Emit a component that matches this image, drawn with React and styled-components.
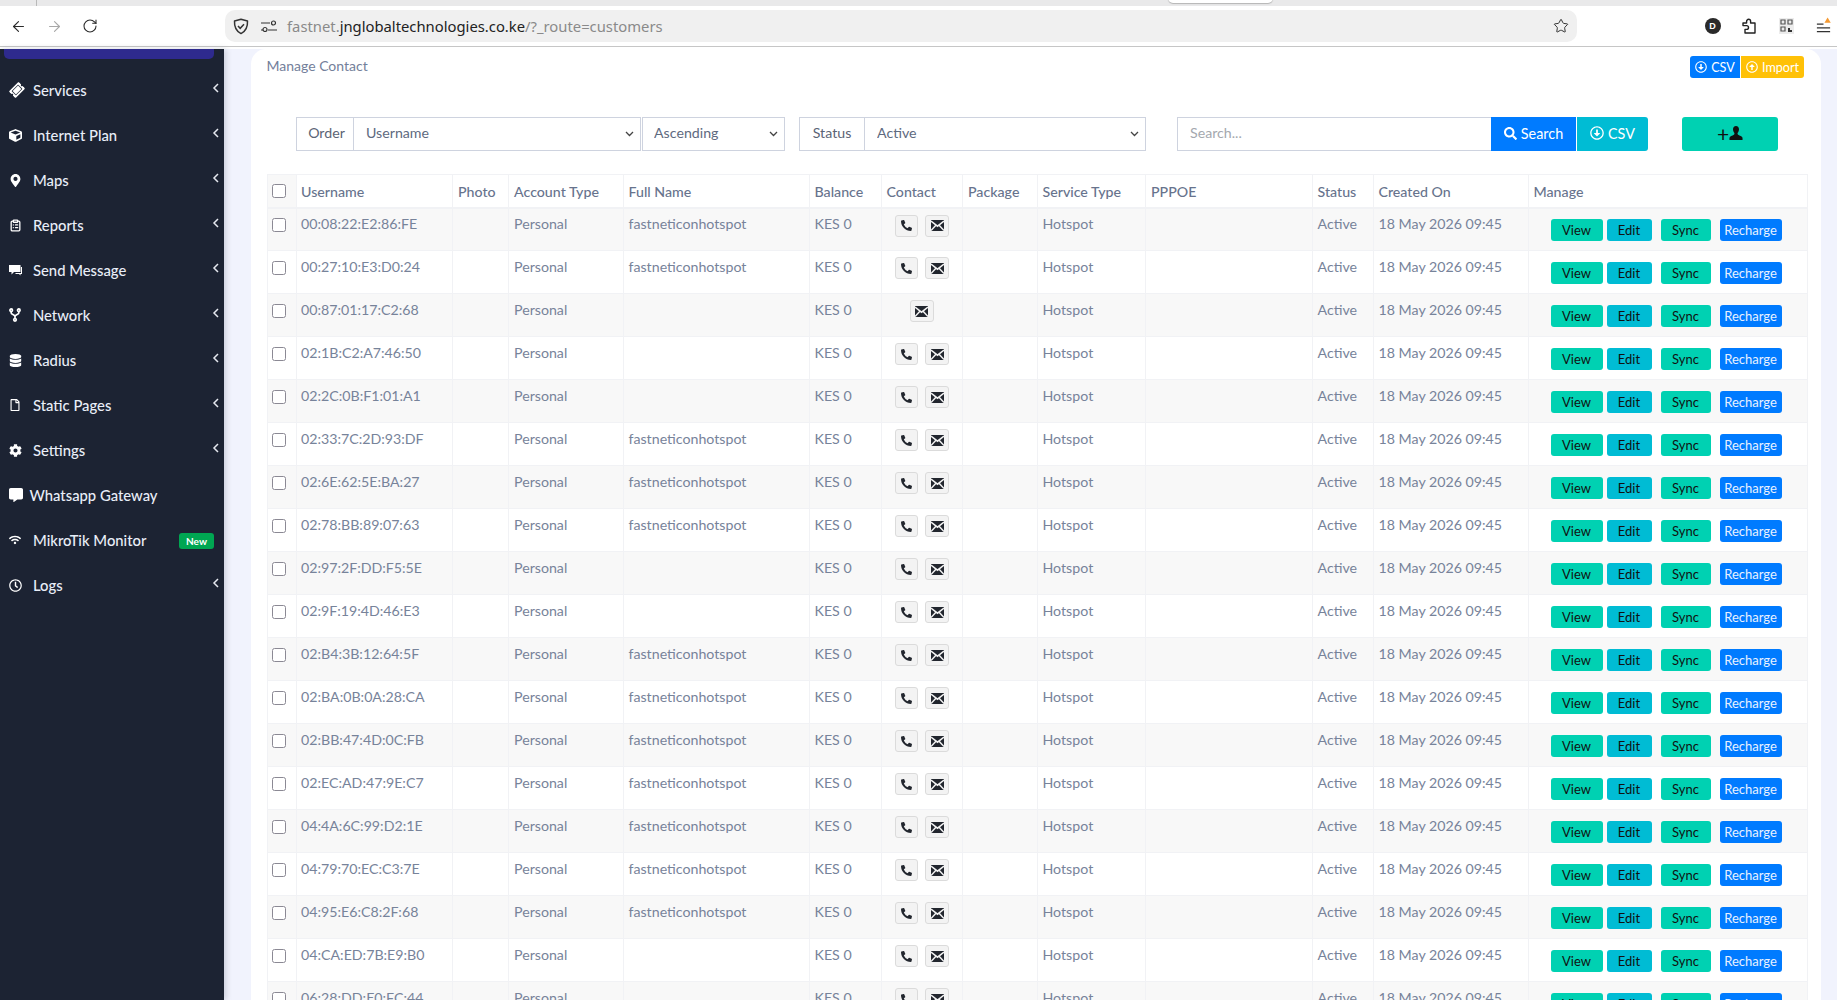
import React from "react";
import styled, { createGlobalStyle } from "styled-components";
import { ArrowLeft, ArrowRight, RotateCw, Star, ClipboardList } from "lucide-react";
import {
  FaTicketAlt, FaCube, FaMapMarkerAlt, FaDatabase, FaRegFile, FaCog, FaCommentAlt, FaWifi,
  FaRegClock, FaSearch, FaRegArrowAltCircleDown, FaRegArrowAltCircleUp, FaPhoneAlt,
} from "react-icons/fa";

const FONT = `"Lato", "Open Sans", "Liberation Sans", sans-serif`;
const CHEVRON = `url("data:image/svg+xml,%3Csvg xmlns='http://www.w3.org/2000/svg' width='9' height='6' viewBox='0 0 9 6'%3E%3Cpath d='M1 1l3.500 3.500L8 1' fill='none' stroke='%23444' stroke-width='1.300'/%3E%3C/svg%3E")`;

const Global = createGlobalStyle`
  html, body { margin: 0; padding: 0; height: 100%; overflow: hidden; background: #fff; }
  body { font-family: ${FONT}; }
  * { box-sizing: border-box; }
`;

const Page = styled.div`
  width: 1837px; height: 1000px; display: flex; flex-direction: column; overflow: hidden;
`;

/* Browser chrome */
const TabStrip = styled.div`
  height: 6px; flex: none; background: #e9e9ea; position: relative;
`;
const TabSliver = styled.div`
  position: absolute; left: 1168px; top: -4px; width: 105px; height: 6.5px;
  background: #fff; border-radius: 0 0 5px 5px; box-shadow: 0 1px 1px #b5b5b5;
`;
const TabDivider = styled.div`
  position: absolute; left: 36px; top: 0; width: 1px; height: 6px; background: #b9b9b9;
`;
const BrowserBar = styled.div`
  height: 41px; flex: none; display: flex; align-items: center; background: #fff;
  border-bottom: 1px solid #c6c6c6; font-family: "Noto Sans", sans-serif;
`;
const NavBtn = styled.div`
  width: 36px; height: 36px; display: flex; align-items: center; justify-content: center;
  color: ${(p) => (p.$off ? "#a8a8a8" : "#2b2b2b")};
`;
const UrlBar = styled.div`
  margin-left: 117px; width: 1352px; height: 32px; border-radius: 10px; background: #f0f0f0;
  display: flex; align-items: center; padding: 0 8px 0 2px; flex: none;
`;
const UrlIcon = styled.div`
  width: 28px; display: flex; align-items: center; justify-content: center; flex: none;
`;
const UrlText = styled.div`
  flex: 1; margin: -1px 0 0 4px; font-size: 14.8px; color: #8a8a8a; white-space: nowrap;
  b { font-weight: 400; color: #222; }
`;
const ExtGroup = styled.div`
  display: flex; align-items: center; padding-left: 127px; gap: 20px;
`;
const ExtIcon = styled.div`
  width: 17px; height: 18px; display: flex; align-items: center; justify-content: center;
`;
const Avatar = styled.div`
  width: 16px; height: 16px; border-radius: 50%; background: #2a2a2a; color: #fff;
  font: 700 9px "Liberation Sans", sans-serif; display: flex; align-items: center; justify-content: center;
`;

/* Layout */
const Body = styled.div`
  flex: 1; display: flex; min-height: 0; padding-top: 2px; background: #fff;
`;
const Sidebar = styled.nav`
  width: 224px; flex: none; background: #1c2333; position: relative; z-index: 1;
  box-shadow: 2px 0 6px rgba(30, 40, 70, 0.18);
`;
const ActiveStub = styled.div`
  height: 10px; margin: 0 10px 0 4px; background: #2e2a8e; border-radius: 0 0 5px 5px;
`;
const Menu = styled.ul`
  list-style: none; margin: 8.5px 0 0; padding: 0;
`;
const MenuItem = styled.li`
  height: 45px; display: flex; align-items: center; position: relative; color: #e9eef8;
  padding-left: 9px; font-size: 14.8px; font-weight: 500;
`;
const MenuIcon = styled.span`
  width: ${(p) => p.$w || 24}px; flex: none; display: flex; align-items: center; color: #fff;
  font-size: 13px;
`;
const MenuChevron = styled.span`
  position: absolute; right: 4px; top: 14px; color: #e6e9f0; display: flex;
`;
const NewBadge = styled.span`
  position: absolute; right: 10px; top: 15px; width: 35px; height: 16px; border-radius: 3px;
  background: #00a652; color: #fff; font-size: 10px; font-weight: 700; display: flex;
  align-items: center; justify-content: center;
`;
const Main = styled.main`
  flex: 1; min-width: 0; background: #f1f3fd; padding: 0 16px 0 27px;
`;
const Card = styled.section`
  background: #fff; border-radius: 15px 15px 0 0; height: 1000px; padding: 7px 15.5px 0 15.5px;
`;

/* Card header */
const CardHead = styled.header`
  display: flex; align-items: flex-start; justify-content: space-between; height: 61px; color: #73809a;
  font-size: 14px;
`;
const CardTitle = styled.div`
  padding-top: 1px;
`;
const MiniActions = styled.div`
  display: flex; gap: 1px; margin-right: 1.5px;
`;
const MiniBtn = styled.button`
  height: 22px; width: ${(p) => p.$w}px; border: 0; border-radius: ${(p) => p.$r};
  background: ${(p) => p.$bg}; color: #fff; font: 400 12.6px ${FONT}; padding: 0;
  display: flex; align-items: center; justify-content: center; gap: 4px;
`;

/* Filter row */
const Filters = styled.form`
  display: flex; height: 34px; padding-left: 29.5px; margin-bottom: 23px;
`;
const Addon = styled.span`
  width: ${(p) => p.$w}px; flex: none; margin-left: ${(p) => p.$ml || 0}px; display: flex; align-items: center;
  justify-content: center; border: 1px solid #ced3df; color: #5b6475; font-size: 14.2px; background: #fff;
  padding: 0 0 3px ${(p) => p.$pl || 0}px;
`;
const Select = styled.select`
  width: ${(p) => p.$w}px; flex: none; margin-left: ${(p) => p.$ml || 0}px; height: 34px;
  border: 1px solid #ced3df; border-left-width: ${(p) => (p.$join ? 0 : 1)}px;
  color: #5e6a80; font: 400 14.2px ${FONT}; padding: 0 20px 3px ${(p) => (p.$join ? 12 : 11)}px; outline: none;
  border-radius: 0; appearance: none;
  background: #fff ${CHEVRON} no-repeat right 6px center;
`;
const SearchInput = styled.input`
  width: 314px; flex: none; margin-left: 31px; height: 34px; border: 1px solid #ced3df; border-right: 0;
  font: 400 14.2px ${FONT}; padding: 0 12px 3px; outline: none;
  &::placeholder { color: #a4a8ae; opacity: 1; }
`;
const FilterBtn = styled.button`
  width: ${(p) => p.$w}px; flex: none; height: 34px; margin-left: ${(p) => p.$ml || 0}px; border: 0;
  border-radius: ${(p) => p.$r || 0}; background: ${(p) => p.$bg}; color: ${(p) => p.$fg || "#fff"};
  font: 400 14.4px ${FONT}; display: flex; align-items: center; justify-content: center;
  gap: ${(p) => p.$gap ?? 4}px; padding: 0 0 2px;
`;
const AddPlus = styled.span`
  font-size: 21px; line-height: 1; color: #111;
`;

/* Table */
const Table = styled.table`
  width: 1539.5px; table-layout: fixed; border-collapse: collapse; color: #77839a; font-size: 14.2px;
`;
const Th = styled.th`
  height: 33px; border: 1px solid #f1f2f5; border-bottom-width: 2px; padding: 1px 5px 0 ${(p) => (p.$tight ? 4 : 5)}px;
  text-align: left; font-weight: 500; color: #67738d; white-space: nowrap; overflow: hidden;
`;
const Tr = styled.tr`
  background: ${(p) => (p.$odd ? "#f8f8f8" : "#fff")};
`;
const Td = styled.td`
  height: 43px; border: 1px solid #f1f2f5; padding: 4.5px 5px 0 ${(p) => (p.$tight ? 4 : 5)}px; vertical-align: top;
  white-space: nowrap; line-height: 21px; overflow: hidden;
`;
const CheckCell = styled.td`
  height: 43px; border: 1px solid #f1f2f5; padding: 9.5px 0 0 4.5px; vertical-align: top;
`;
const CheckHead = styled.th`
  border: 1px solid #f1f2f5; border-bottom-width: 2px; background: #f8f8f8; padding: 0 0 0 4.5px; text-align: left;
`;
const Check = styled.input.attrs({ type: "checkbox" })`
  width: 14px; height: 14px; margin: 0; display: block; appearance: none;
  background: #fff; border: 1px solid #8b8994; border-radius: 2.5px;
`;
const ContactWrap = styled.div`
  display: flex; justify-content: center; gap: 7px; margin-top: 1.5px;
`;
const ContactBtn = styled.span`
  width: 23.5px; height: 22px; background: #f3f3f3; border: 1px solid #dbdbdb; border-radius: 3px;
  display: flex; align-items: center; justify-content: center; color: #22262e;
`;
const ManageWrap = styled.div`
  display: flex; padding: 6px 0 0 17px;
`;
const ActionBtn = styled.button`
  height: 22px; width: ${(p) => p.$w}px; margin-right: ${(p) => p.$mr}px; flex: none; border: 0; border-radius: 3px;
  padding: 0; background: ${(p) => p.$bg}; color: ${(p) => p.$fg}; font: 400 13px ${FONT};
`;

const MailIcon = () => (
  <svg width="13" height="11" viewBox="0 0 13 11">
    <rect width="13" height="11" fill="#22262e" />
    <path d="M0 1 6.5 6.2 13 1M0 10.5l4.700-5M13 10.5l-4.700-5" fill="none" stroke="#f3f3f3" strokeWidth="1.5" />
  </svg>
);
const PuzzleIcon = () => (
  <svg width="15" height="16" viewBox="0 0 15 16" fill="none" stroke="#222" strokeWidth="1.4">
    <path d="M1 5h3.600V3.300a2 2 0 0 1 4 0V5H13v10H3v-3.600h1.600a1.900 1.900 0 0 0 0-3.800H1z" strokeLinejoin="round" />
  </svg>
);
const QrIcon = () => (
  <svg width="15" height="16" viewBox="0 0 15 16">
    <rect width="15" height="16" fill="#ececec" />
    <path d="M2 2h4v4H2zM9 2h4v4H9zM2 9h4v4H2z" fill="none" stroke="#555" strokeWidth="1.2" />
    <path d="M9 10h2v2h2v2H9z" fill="#333" />
  </svg>
);
const MenuGlyph = () => (
  <svg width="18" height="18" viewBox="0 0 18 18">
    <path d="M2 7h7M2 11h14M2 15h14" stroke="#333" strokeWidth="1.3" />
    <path d="M10 5.500 13.300 0l3.400 5.500z" fill="#f59a32" />
  </svg>
);
const ShieldIcon = () => (
  <svg width="16" height="17" viewBox="0 0 16 17" fill="none" stroke="#333" strokeWidth="1.5">
    <path d="M8 1.200 14.500 3c.3 5.600-1.700 10.200-6.500 12.600C3.200 13.200 1.200 8.600 1.500 3z" strokeLinejoin="round" />
    <path d="m5 8 2.200 2.300L11 6.300" />
  </svg>
);
const SliderIcon = () => (
  <svg width="16" height="12" viewBox="0 0 16 12" fill="none" stroke="#333" strokeWidth="1.2">
    <path d="M0 3h9M0 10h2M7 10h9" />
    <circle cx="12.5" cy="3" r="2" />
    <circle cx="4" cy="9.5" r="2" />
  </svg>
);
const ForkIcon = () => (
  <svg width="12" height="14" viewBox="0 0 12 14" fill="none" stroke="#fff" strokeWidth="1.7">
    <circle cx="2.2" cy="2.2" r="1.3" />
    <circle cx="9.8" cy="2.2" r="1.3" />
    <circle cx="6" cy="11.8" r="1.3" />
    <path d="M2.200 3.500v1.500c0 1.500 3.800 1.500 3.800 3.500v2M9.800 3.500v1.500C9.800 6.500 6 6.500 6 8.500" />
  </svg>
);
const ChatIcon = () => (
  <svg width="13" height="12" viewBox="0 0 13 12" fill="#fff">
    <path d="M0 1h11.500v7H5L2.500 10.500V8H0z" />
    <path d="M12 3h1v7h-1.500v1.500L10 10H6l1-1h5z" />
  </svg>
);
const UserGlyph = () => (
  <svg width="14" height="14" viewBox="0 0 15 15" fill="#111">
    <path d="M7.500 0C5.500 0 4.300 1.500 4.300 3.600c0 1.600.6 3 1.500 4 .2.700 0 1.300-.6 1.700C3.500 10.300 1 11 .5 12.500V15h14v-2.500c-.5-1.500-3-2.200-4.700-3.200-.6-.4-.8-1-.6-1.700.9-1 1.500-2.400 1.500-4C10.700 1.500 9.500 0 7.500 0z" />
  </svg>
);

const menu = [
  ["Services", <FaTicketAlt style={{ transform: "rotate(-45deg)", marginLeft: 1 }} size={14} />, true],
  ["Internet Plan", <FaCube size={13} />, true],
  ["Maps", <FaMapMarkerAlt size={13} />, true],
  ["Reports", <ClipboardList size={13} strokeWidth={2.4} />, true],
  ["Send Message", <ChatIcon />, true],
  ["Network", <ForkIcon />, true],
  ["Radius", <FaDatabase size={13} />, true],
  ["Static Pages", <FaRegFile size={12} />, true],
  ["Settings", <FaCog size={13} />, true],
  ["Whatsapp Gateway", <FaCommentAlt size={14} />, false, 20.5],
  ["MikroTik Monitor", <FaWifi size={12} />, false, 24, true],
  ["Logs", <FaRegClock size={13} />, true],
];

const rows = [
  ["00:08:22:E2:86:FE", 1, 1], ["00:27:10:E3:D0:24", 1, 1], ["00:87:01:17:C2:68", 0, 0],
  ["02:1B:C2:A7:46:50", 0, 1], ["02:2C:0B:F1:01:A1", 0, 1], ["02:33:7C:2D:93:DF", 1, 1],
  ["02:6E:62:5E:BA:27", 1, 1], ["02:78:BB:89:07:63", 1, 1], ["02:97:2F:DD:F5:5E", 0, 1],
  ["02:9F:19:4D:46:E3", 0, 1], ["02:B4:3B:12:64:5F", 1, 1], ["02:BA:0B:0A:28:CA", 1, 1],
  ["02:BB:47:4D:0C:FB", 1, 1], ["02:EC:AD:47:9E:C7", 1, 1], ["04:4A:6C:99:D2:1E", 1, 1],
  ["04:79:70:EC:C3:7E", 1, 1], ["04:95:E6:C8:2F:68", 1, 1], ["04:CA:ED:7B:E9:B0", 0, 1],
  ["06:28:DD:E0:FC:44", 0, 1],
];

const cols = [29.5, 156, 56, 114.5, 186, 72, 81.5, 74.5, 108.5, 166.5, 61, 155, 279];
const heads = ["Username", "Photo", "Account Type", "Full Name", "Balance", "Contact", "Package", "Service Type", "PPPOE", "Status", "Created On", "Manage"];

export default function App() {
  return (
    <Page>
      <Global />
      <TabStrip>
        <TabDivider />
        <TabSliver />
      </TabStrip>
      <BrowserBar>
        <NavBtn><ArrowLeft size={17} strokeWidth={1.6} /></NavBtn>
        <NavBtn $off><ArrowRight size={17} strokeWidth={1.6} /></NavBtn>
        <NavBtn><RotateCw size={16} strokeWidth={1.6} /></NavBtn>
        <UrlBar>
          <UrlIcon><ShieldIcon /></UrlIcon>
          <UrlIcon><SliderIcon /></UrlIcon>
          <UrlText>fastnet.<b>jnglobaltechnologies.co.ke</b>/?_route=customers</UrlText>
          <Star size={16} strokeWidth={1.5} color="#333" />
        </UrlBar>
        <ExtGroup>
          <ExtIcon><Avatar>D</Avatar></ExtIcon>
          <ExtIcon><PuzzleIcon /></ExtIcon>
          <ExtIcon><QrIcon /></ExtIcon>
          <ExtIcon><MenuGlyph /></ExtIcon>
        </ExtGroup>
      </BrowserBar>
      <Body>
        <Sidebar>
          <ActiveStub />
          <Menu>
            {menu.map(([label, icon, chev, w, isNew]) => (
              <MenuItem key={label}>
                <MenuIcon $w={w}>{icon}</MenuIcon>
                {label}
                {chev && (
                  <MenuChevron>
                    <svg width="8" height="12" viewBox="0 0 8 12" fill="none" stroke="currentColor" strokeWidth="1.5"><path d="M6 2 2 6l4 4" /></svg>
                  </MenuChevron>
                )}
                {isNew && <NewBadge>New</NewBadge>}
              </MenuItem>
            ))}
          </Menu>
        </Sidebar>
        <Main>
          <Card>
            <CardHead>
              <CardTitle>Manage Contact</CardTitle>
              <MiniActions>
                <MiniBtn $w={50} $bg="#007bff" $r="3px 0 0 3px"><FaRegArrowAltCircleDown size={12} />CSV</MiniBtn>
                <MiniBtn $w={63} $bg="#ffc107" $r="0 3px 3px 0"><FaRegArrowAltCircleUp size={12} />Import</MiniBtn>
              </MiniActions>
            </CardHead>
            <Filters>
              <Addon $w={58} $pl={3}>Order</Addon>
              <Select $w={287} $join defaultValue="Username"><option>Username</option></Select>
              <Select $w={143} $ml={1} defaultValue="Ascending"><option>Ascending</option></Select>
              <Addon $w={66} $ml={14}>Status</Addon>
              <Select $w={281} $join defaultValue="Active"><option>Active</option></Select>
              <SearchInput placeholder="Search..." />
              <FilterBtn $w={85} $bg="#007bff"><FaSearch size={13} />Search</FilterBtn>
              <FilterBtn $w={71} $ml={1} $bg="#00bcd4" $r="0 3px 3px 0"><FaRegArrowAltCircleDown size={14} />CSV</FilterBtn>
              <FilterBtn $w={96} $ml={34} $gap={0} $bg="#00d1b2" $fg="#111" $r="3px"><AddPlus>+</AddPlus><UserGlyph /></FilterBtn>
            </Filters>
            <Table>
              <colgroup>
                {cols.map((w, i) => <col key={i} style={{ width: w }} />)}
              </colgroup>
              <thead>
                <tr>
                  <CheckHead><Check /></CheckHead>
                  {heads.map((h, i) => <Th key={h} $tight={i === 0}>{h}</Th>)}
                </tr>
              </thead>
              <tbody>
                {rows.map(([mac, full, phone], i) => (
                  <Tr key={mac} $odd={i % 2 === 0}>
                    <CheckCell><Check /></CheckCell>
                    <Td $tight>{mac}</Td>
                    <Td />
                    <Td>Personal</Td>
                    <Td>{full ? "fastneticonhotspot" : ""}</Td>
                    <Td>KES 0</Td>
                    <Td>
                      <ContactWrap>
                        {phone ? <ContactBtn><FaPhoneAlt size={11} /></ContactBtn> : null}
                        <ContactBtn><MailIcon /></ContactBtn>
                      </ContactWrap>
                    </Td>
                    <Td />
                    <Td>Hotspot</Td>
                    <Td />
                    <Td>Active</Td>
                    <Td>18 May 2026 09:45</Td>
                    <Td>
                      <ManageWrap>
                        <ActionBtn $w={52} $mr={4} $bg="#00d1b2" $fg="#111">View</ActionBtn>
                        <ActionBtn $w={45} $mr={9} $bg="#00bcd4" $fg="#111">Edit</ActionBtn>
                        <ActionBtn $w={50} $mr={9} $bg="#00d1b2" $fg="#111">Sync</ActionBtn>
                        <ActionBtn $w={62} $mr={0} $bg="#007bff" $fg="#e8f1ff">Recharge</ActionBtn>
                      </ManageWrap>
                    </Td>
                  </Tr>
                ))}
              </tbody>
            </Table>
          </Card>
        </Main>
      </Body>
    </Page>
  );
}
